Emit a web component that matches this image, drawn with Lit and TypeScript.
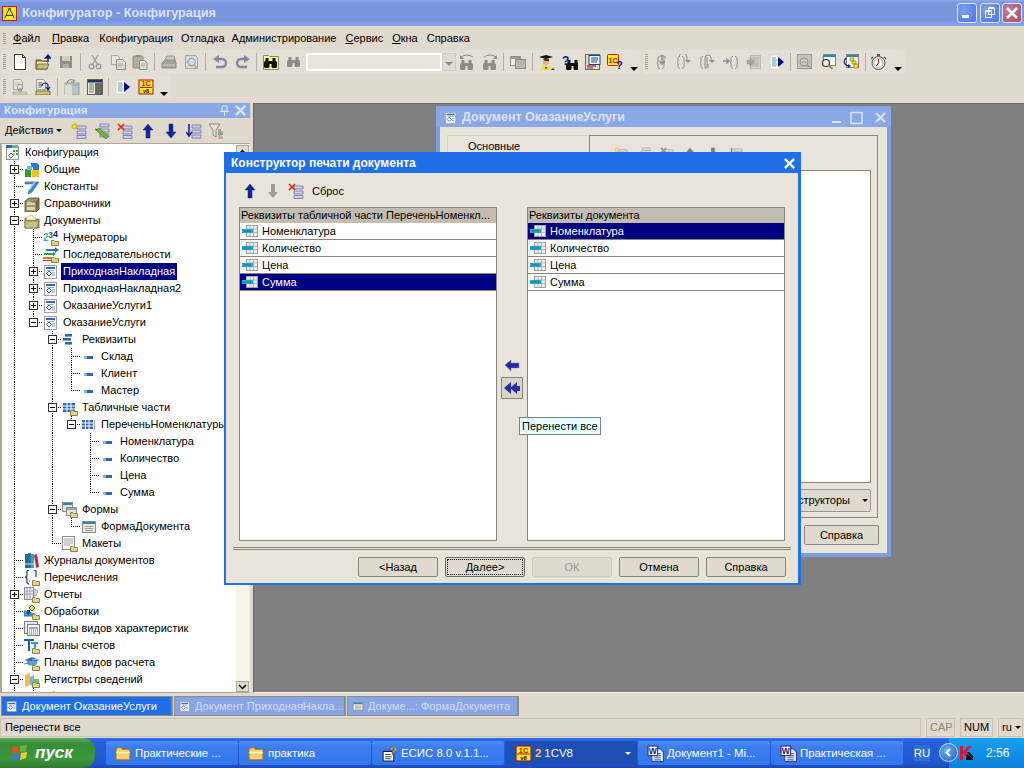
import { LitElement, html, css, svg } from "lit";
import { customElement } from "lit/decorators.js";

const fold = svg`<path d="M8.5 10.5h2.5l1 1h3.5v4h-7z" fill="#dcd488" stroke="#8c8450"/>`;
const bino = (c: string, x = 0, y = 0) => svg`<g transform="translate(${x} ${y})" fill="${c}"><rect x="1" y="6" width="5.5" height="7" rx="1.5"/><rect x="8.5" y="6" width="5.5" height="7" rx="1.5"/><rect x="2.5" y="3" width="3" height="4"/><rect x="9.5" y="3" width="3" height="4"/><rect x="6" y="6" width="3" height="3"/></g>`;
const brace = (c: string, x: number) => svg`<path d="M${x + 3} 2.500c-2 0-2 1-2 3.500s0 2.500-1 2.500c1 0 1 .5 1 2.500s0 3.500 2 3.500M${x + 5} 2.500c2 0 2 1 2 3.500s0 2.500 1 2.500c-1 0-1 .5-1 2.500s0 3.500-2 3.500" fill="none" stroke="${c}"/>`;
const c1 = svg`<rect x="1" y="1" width="14" height="14" fill="#f8ec20" stroke="#b01020"/><text x="8" y="7.2" text-anchor="middle" font-family="Liberation Sans" font-weight="700" font-size="7" fill="#c01010">1С</text><rect x="2" y="8" width="12" height="1" fill="#c01010"/><text x="8" y="14" text-anchor="middle" font-family="Liberation Sans" font-weight="700" font-size="5.5" fill="#101010">v8</text>`;
const pageRun = svg`<rect x="1" y="1" width="10" height="14" fill="#fff" stroke="#d8d4c8"/><path d="M3 4h4M3 6h5M3 8h4M3 10h5M3 12h4" stroke="#58a0a8"/><path d="M9 3l6 5-6 5z" fill="#000090"/>`;
const tdoc = svg`<rect x="1.500" y="1.500" width="12" height="13" fill="#fff" stroke="#a0a0a0"/><rect x="3" y="3" width="9" height="2" fill="#3068c8"/><path d="M4 6.500h7" stroke="#b0b0b0"/><path d="M6 7l2.500 2.500L6 12 3.500 9.500z" fill="#fff" stroke="#3068c8"/><path d="M9 9h3M9 11h3" stroke="#7098d8"/>`;
const tform = svg`<rect x="1.500" y="2.500" width="13" height="11" fill="#ece9d8" stroke="#8c8c8c"/><rect x="2" y="3" width="12" height="2" fill="#2090a8"/><path d="M4 7.500h8M4 9.500h8M4 11.500h8" stroke="#9c9c9c"/>`;
const barsBlue = svg`<path d="M3 2h7v2H3zM1 6h8v2H1zM3 10h7v2H3z" fill="#2c68b8"/><path d="M3 4.500h7M1 8.500h8M3 12.500h7" stroke="#80a8d8"/>`;
const attr = svg`<path d="M3 7h9v3H3z" fill="#2c68b8"/><path d="M3 7h3v3H3z" fill="#88b0e0"/>`;
const tableBlue = svg`<rect x="1" y="3" width="12" height="9" fill="#2c68c0"/><path d="M1 6h12M1 9h12M5 3v9M9 3v9" stroke="#fff"/>`;
const attrIcon = svg`<rect x="4.500" y="2.500" width="11" height="11" fill="#ececec" stroke="#a0a0a0"/><path d="M8 2v11M11.500 2v11M4 6h11M4 9.500h11" stroke="#b8b8b8"/><rect x="0" y="6" width="11" height="4" fill="#20a8c8"/><rect x="2" y="7.500" width="7" height="1" fill="#2c6c98"/>`;
const listX = svg`<path d="M6 3h9v3H6zM6 8h9v3H6zM6 12.500h9v3H6z" fill="#cfd0ee" stroke="#7070a8" stroke-width=".8"/><path d="M1 1l6 6M7 1L1 7" stroke="#e03000" stroke-width="1.700"/>`;

const ICONS: Record<string, unknown> = {
  app: svg`<rect x=".5" y=".5" width="15" height="15" fill="#f4e820" stroke="#c01020"/><path d="M8 2L3 13M8 2l5 11M4 10h8" fill="none" stroke="#303010"/><circle cx="8" cy="3" r="1" fill="#303010"/>`,
  new: svg`<path d="M2.500.5h8l3 3v12h-11z" fill="#fff" stroke="#404040"/><path d="M10.500.5v3h3" fill="none" stroke="#404040"/>`,
  open: svg`<path d="M1 6h5l1 1h5v8H1z" fill="#b0a860" stroke="#585830"/><path d="M2 8h10v2H2z" fill="#f0ec98"/><path d="M1 15l2-5h11l-2 5z" fill="#c8c070" stroke="#585830" stroke-width=".7"/><path d="M13 8V3M10.500 4L13 1l2.500 3z" stroke="#102080" fill="#102080" stroke-width="1.400"/>`,
  save: svg`<path d="M2 2h12v12H2z" fill="#8f8f82"/><path d="M4 2h8v5H4z" fill="#cfcdc2"/><path d="M5 10h6v4H5z" fill="#b4b2a6"/>`,
  cut: svg`<circle cx="4.500" cy="12.500" r="2.300" fill="none" stroke="#9292a2" stroke-width="1.300"/><circle cx="11.500" cy="12.500" r="2.300" fill="none" stroke="#9292a2" stroke-width="1.300"/><path d="M5.500 10.500L11 1M10.500 10.500L5 1" stroke="#a0a094" stroke-width="1.400"/>`,
  copy: svg`<path d="M1.500 1.500h6l2 2v7h-8z" fill="#e8e6dc" stroke="#a8a69a"/><path d="M6.500 5.500h6l3 3v7h-9z" fill="#dedcd2" stroke="#8a8a80"/><path d="M8 10h5M8 12h5" stroke="#a8a69a"/>`,
  paste: svg`<rect x="1" y="2" width="10" height="12" rx="1" fill="#b0ae9e" stroke="#8a8a7c"/><rect x="4" y="1" width="4" height="2" fill="#8a8a7c"/><path d="M7.500 6.500h5l2.500 2.500v6.500H7.500z" fill="#e4e2d8" stroke="#8a8a80"/><path d="M9 10h4M9 12h4" stroke="#a8a69a"/>`,
  print: svg`<path d="M1 9l3-3h10l1 3v5H1z" fill="#a8a69c" stroke="#8c8a80"/><path d="M4 6l2-4h7l1 4z" fill="#cccabe" stroke="#989688"/><path d="M2 11h12" stroke="#ccc9be"/>`,
  prev: svg`<path d="M1.500 1.500h10l2 2v11h-12z" fill="#dddbd0" stroke="#a8a69a"/><circle cx="7.500" cy="8" r="3.600" fill="#d4dfe4" stroke="#8fa0a8" stroke-width="1.200"/><path d="M10 11l3.500 3.500" stroke="#a8a69a" stroke-width="1.600"/>`,
  undo: svg`<path d="M5 5h5a3.500 3.500 0 0 1 0 8H4" fill="none" stroke="#8484a8" stroke-width="2.400"/><path d="M7 1v8L1 5z" fill="#8484a8"/>`,
  redo: svg`<path d="M11 5H6a3.500 3.500 0 0 0 0 8h6" fill="none" stroke="#8484a8" stroke-width="2.400"/><path d="M9 1v8l6-4z" fill="#8484a8"/>`,
  find: svg`<path d="M.5 1.500h5l1 1h9v13H.5z" fill="#f8f4a0" stroke="#888858"/>${bino("#101010", 0, 1)}`,
  bin: bino("#8c8c88"),
  findp: svg`<path d="M2 3Q8-1 14 3" fill="none" stroke="#8a8a86"/><path d="M1 1v4h4z" fill="#8a8a86"/>${bino("#8c8c88", 0, 3)}`,
  findn: svg`<path d="M2 3Q8-1 14 3" fill="none" stroke="#8a8a86"/><path d="M15 1v4h-4z" fill="#8a8a86"/>${bino("#8c8c88", 0, 3)}`,
  win: svg`<rect x=".5" y="2.500" width="10" height="9" fill="#eeece4" stroke="#8c8c88"/><rect x="5.500" y="5.500" width="10" height="9" fill="#b8b6ae" stroke="#8c8c88"/><rect x="1" y="3" width="9" height="2" fill="#9a9a96"/>`,
  student: svg`<path d="M0 3l7-2 7 2-7 2z" fill="#101010"/><path d="M4 5h6v5l-3 2-3-2z" fill="#e8b488"/><path d="M4 5l6 0 0 2H6z" fill="#403020"/><path d="M1 16l3-5 3 2 3-2 4 5z" fill="#e8e040"/><path d="M6 13l1 3 1-3z" fill="#403080"/><path d="M12 16l2-2 2 2z" fill="#303030"/>`,
  qbin: svg`<text x="0" y="11" font-family="Liberation Sans" font-weight="700" font-size="12" fill="#0818a0">?</text>${bino("#101010", 3, 3)}`,
  report: svg`<rect x=".5" y=".5" width="14" height="15" fill="#dcdcc4" stroke="#687838"/><rect x="4" y="1.500" width="11" height="9" fill="#fff" stroke="#1040a0"/><path d="M6 4h7M6 6h7M6 8h6" stroke="#1040a0"/><path d="M2 12h9" stroke="#e02020" stroke-width="1.400"/><path d="M2 14h6" stroke="#3050c0"/>`,
  q1c: svg`<rect x=".5" y=".5" width="11" height="11" rx="1" fill="#f8ec20" stroke="#c02020"/><text x="6" y="8.500" text-anchor="middle" font-family="Liberation Sans" font-weight="700" font-size="7" fill="#c01010">1С</text><text x="9" y="15" font-family="Liberation Sans" font-weight="700" font-size="11" fill="#0818a0">?</text>`,
  d1: svg`${brace("#8c8c8c", 3)}<path d="M8 1v9M5.500 7L8 10.500 10.500 7" fill="none" stroke="#8c8c8c" stroke-width="1.300"/><path d="M4 4a4.500 4.500 0 0 1 8 0" fill="none" stroke="#8c8c8c"/>`,
  d2: svg`${brace("#8c8c8c", 0)}<path d="M2 3a4 4 0 0 1 8 0v3" fill="none" stroke="#8c8c8c"/><path d="M8 6h6l-3 3z" fill="#8c8c8c"/>`,
  d3: svg`${brace("#8c8c8c", 0)}<path d="M5 14V4a3 3 0 0 1 6 0v2" fill="none" stroke="#8c8c8c"/><path d="M9 6h6l-3 3z" fill="#8c8c8c"/><path d="M8 10v4" stroke="#8c8c8c"/>`,
  d4: svg`<path d="M0 7h5M3 4.500L6.500 7 3 9.500" fill="none" stroke="#8c8c8c" stroke-width="1.300"/>${brace("#8c8c8c", 7)}`,
  d5: svg`<rect x="4.500" y="1.500" width="10" height="13" fill="#d4d2c8" stroke="#bcbab0"/><path d="M6 4h7M6 6h7M6 8h7M6 10h7M6 12h7" stroke="#b0aea4"/><path d="M1 6h3V3l4.500 5L4 13v-3H1z" fill="#a8a698" stroke="#98968a" stroke-width=".5"/>`,
  run: pageRun,
  z1: svg`<rect x=".5" y=".5" width="14" height="14" fill="#c4c4ba" stroke="#9c9a90"/><circle cx="7" cy="8" r="4" fill="#cfcfc0" stroke="#8c8c7e"/><path d="M10 11l5 4" stroke="#9c9a90" stroke-width="1.500"/><path d="M5 8h4" stroke="#8c8c7e"/>`,
  z2: svg`<rect x="3.500" y=".5" width="12" height="11" fill="#fff" stroke="#808080"/><rect x="4" y="1" width="11" height="2" fill="#2090a8"/><circle cx="6" cy="9" r="3.500" fill="#eee" stroke="#303030" stroke-width="1.200"/><path d="M8.500 11.500l4 3.500" stroke="#c08030" stroke-width="1.800"/>`,
  z3: svg`<rect x="3.500" y=".5" width="12" height="13" fill="#fff" stroke="#808080"/><rect x="4" y="1" width="11" height="2" fill="#2090a8"/><path d="M7 4h4v3H7zM9 7h4v3H9zM11 10h4v4h-4z" fill="#f0e020" stroke="#807010" stroke-width=".6"/><path d="M3 4C0 7 1 11 5 12" fill="none" stroke="#102090" stroke-width="1.300"/><path d="M5 10v4l3-2z" fill="#102090"/>`,
  watch: svg`<circle cx="7.500" cy="9" r="6.500" fill="#e8e8e4" stroke="#555"/><circle cx="7.500" cy="9" r="4.500" fill="#fff" stroke="#aaa"/><rect x="6" y="0" width="3" height="2" fill="#555"/><path d="M13 3l2 2M2 3L0 5" stroke="#555" stroke-width="1.300"/><path d="M7.500 9V5" stroke="#d01010"/><path d="M7.500 9l-2 3" stroke="#101080"/>`,
  r1: svg`<path d="M1.500.5h7l2 2v8h-9z" fill="#e4e2d8" stroke="#aaa89c"/><path d="M3 4h5M3 6h5" stroke="#c4c2b8"/><circle cx="8" cy="8" r="2.800" fill="none" stroke="#9a9a92"/><path d="M6 11l2 2 2-2M8 9v4" stroke="#8888a0" fill="none"/><path d="M1 13h14v3H1z" fill="#ccc8a8" stroke="#aaa68c" stroke-width=".6"/>`,
  r2: svg`<path d="M1.500.5h7l2 2v8h-9z" fill="#f0eee4" stroke="#9c9a8e"/><path d="M3 4h4" stroke="#e03020"/><path d="M3 6h4" stroke="#3050c0"/><path d="M3 8h4" stroke="#30a050"/><path d="M7 7a3 3 0 0 1 6 0v3M11 8l2 3 2-3" fill="none" stroke="#102090" stroke-width="1.200"/><path d="M1 12h14v4H1z" fill="#d0c870" stroke="#585830" stroke-width=".8"/>`,
  r3: svg`<rect x="1" y="4" width="14" height="12" fill="#b8c4cc" stroke="#a0a098"/><rect x="1" y="6" width="7" height="10" fill="#dcdcd0"/><path d="M9 6h5" stroke="#909aa0"/><path d="M3 4a4 4 0 0 1 7-2M10 0v3H7" fill="none" stroke="#808088"/>`,
  r4: svg`<rect x=".5" y=".5" width="15" height="15" fill="#ece9d8" stroke="#606060"/><rect x="1" y="1" width="14" height="2.500" fill="#2c3050"/><rect x="8" y="4" width="7" height="11" fill="#686868"/><path d="M2 5h5M2 7h5" stroke="#30a080"/><path d="M2 9h5" stroke="#d05030"/><path d="M2 11h5M2 13h5" stroke="#808080"/>`,
  c18: c1,
  root: svg`<rect x="1.500" y="1.500" width="12" height="13" fill="#f4f4f4" stroke="#9c9c9c"/><rect x="1" y="0" width="6" height="3" fill="#3068c8"/><path d="M7 0h6v3H7z" fill="#60b0a0"/><path d="M8 5h2v2H8zM11 5h2v2h-2zM11 8h2v2h-2z" fill="#30a050"/><path d="M8 8h2v2H8z" fill="#d0c040"/><path d="M6 8l2.500 2.500L6 13 3.500 10.500z" fill="#fff" stroke="#3068c8"/>`,
  common: svg`<path d="M7 1h6l2 2v6H9V5H7z" fill="#2080d8"/><path d="M1 7h6v8H1z" fill="#30a030"/><path d="M8 8h7v7H8z" fill="#f0c020"/><path d="M3 4h5v4H3z" fill="#70b8f0"/>`,
  const: svg`<path d="M1 3h14L8 13 4 15l1-4 4-6H1z" fill="#3884d8" stroke="#205090" stroke-width=".5"/><path d="M5 11l6-8" stroke="#a8d0f0" stroke-width="1.500"/><path d="M1 3h10" stroke="#a0a0a0"/>`,
  cab: svg`<path d="M1 5l4-3h10v11l-3 3H1z" fill="#989870" stroke="#404030" stroke-width=".8"/><path d="M3 6h8v3H3z" fill="#d8d8b0"/><path d="M3 11h8v3H3z" fill="#d8d8b0"/><path d="M7 6h5" stroke="#d03020"/><path d="M12 5v10l3-3V2z" fill="#686848"/>`,
  docs: svg`<path d="M1 5h5l1 1h8v9H1z" fill="#b0a868" stroke="#606038" stroke-width=".8"/><path d="M2 5l5-3 5 3-1 2H3z" fill="#fff8c0" stroke="#a8a868" stroke-width=".6"/><path d="M1 8h14l-2 7H1z" fill="#c8c080" stroke="#606038" stroke-width=".6"/>`,
  num: svg`<text x="0" y="11" font-family="Liberation Sans" font-weight="700" font-size="10" fill="#40b0c0">2</text><text x="5" y="8" font-family="Liberation Sans" font-weight="700" font-size="9" fill="#208840">3</text><text x="10" y="7" font-family="Liberation Sans" font-weight="700" font-size="9" fill="#101090">4</text>${fold}`,
  seq: svg`<path d="M3 2h9v2H3z" fill="#3070c8"/><path d="M12 0l4 3-4 3z" fill="#3070c8"/><path d="M1 6h9v2H1z" fill="#30a040"/><path d="M10 4.500l3 2.500-3 2.500z" fill="#30a040"/><path d="M0 10h8v2H0z" fill="#e07030"/><path d="M0 13h8v1H0z" fill="#c03020"/>${fold}`,
  doc: tdoc,
  attrs: barsBlue,
  attr,
  tabs: svg`${tableBlue}${fold}`,
  table: svg`<g transform="translate(0 1)"><rect x="1" y="2" width="11" height="9" fill="#2c68c0"/><path d="M1 5h11M1 8h11M4.500 2v9M8 2v9" stroke="#fff"/></g><path d="M13.500 3v10" stroke="#a0a0a0"/>`,
  forms: svg`<rect x=".5" y=".5" width="10" height="9" fill="#e8e4d8" stroke="#8c8c8c"/><rect x="1" y="1" width="9" height="2" fill="#2090a8"/><rect x="4.500" y="5.500" width="10" height="8" fill="#e8e4d8" stroke="#8c8c8c"/><rect x="5" y="6" width="9" height="2" fill="#80b0b8"/>${fold}`,
  form: tform,
  layouts: svg`<rect x=".5" y=".5" width="12" height="13" fill="#fff" stroke="#8c8c8c"/><path d="M2 3h9M2 5h9M2 7h9M2 9h6" stroke="#a0a0a0"/>${fold}`,
  journal: svg`<rect x="1" y="1" width="3" height="14" fill="#287840"/><rect x="4" y="0" width="3" height="15" fill="#2070c0"/><rect x="7" y="1" width="3" height="14" fill="#40a0c0"/><path d="M10 2l3-1 2 13-3 1z" fill="#b03040"/><path d="M1 11h9" stroke="#e0e0e0"/>`,
  enum: svg`<path d="M5 0C2 0 3 3 3 5S2 7 1 7c1 0 2 1 2 2s-1 5 2 5M10 0c3 0 2 3 2 4" fill="none" stroke="#205090" stroke-width="1.300"/><path d="M12 4v3" stroke="#205090" stroke-width="1.300"/><path d="M5 11h1" stroke="#555"/>${fold}`,
  reports: svg`<rect x=".5" y=".5" width="9" height="12" fill="#e8e8f0" stroke="#8c8c8c"/><path d="M0 4h10M0 7h10M3 0v12M6 0v12" stroke="#a8a8b8"/><path d="M10 2l4 2-2 5h-2z" fill="#dcdcdc" stroke="#8c8c8c" stroke-width=".7"/>${fold}`,
  proc: svg`<path d="M8 1l3 3-3 3-3-3z" fill="#f0e040" stroke="#807820"/><path d="M0 6v6h10V9" fill="#40a0c8" stroke="#307090"/><path d="M3 6h3v3H3z" fill="#1040a0"/><path d="M2 8.500h5L4.500 11z" fill="#1040a0"/>${fold}`,
  chart: svg`<rect x=".5" y=".5" width="13" height="12" fill="#e4e4e4" stroke="#808080"/><rect x="3.500" y="3.500" width="12" height="11" fill="#fff" stroke="#808080"/><path d="M5 7h9" stroke="#2050a0"/><path d="M5 9h9M5 11h9M5 13h9" stroke="#3060b0" stroke-dasharray="1 1"/>`,
  acc: svg`<path d="M0 1h10v2H6v10H4V3H0z" fill="#1858c0"/><path d="M7 4h7v2h-2v5h-2V6H7z" fill="#30a0c8"/>${fold}`,
  calc: svg`<path d="M1 5l7-3 7 3-7 3z" fill="#3070b8"/><path d="M3 6v3c2 2 8 2 10 0V6" fill="#58a0d8"/><path d="M0 9l5-1" stroke="#808080"/><path d="M8 5l6-1" stroke="#98c0e8"/>${fold}`,
  reg: svg`<path d="M1 3l5-2v12l-5 2z" fill="#f0c040"/><path d="M6 5l4-2v10H6z" fill="#78b0e0"/><path d="M10 7h5v6h-5z" fill="#70c070"/>${fold}`,
  reg2: svg`<path d="M2 6l4-3 4 3v6H2z" fill="#c0c040"/><path d="M7 4l4-2 3 3v5H7z" fill="#e0a040"/>${fold}`,
  tform,
  tdoc,
  up: svg`<path d="M8 1L3 7h3v8h4V7h3z" fill="#102890" stroke="#102890" stroke-width=".5"/>`,
  down: svg`<path d="M8 15L3 9h3V1h4v8h3z" fill="#102890" stroke="#102890" stroke-width=".5"/>`,
  downg: svg`<path d="M8 15L3 9h3V1h4v8h3z" fill="#9c9c9c"/>`,
  listNew: svg`<path d="M6 3h9v3H6zM6 8h9v3H6zM6 12.500h9v3H6z" fill="#cfd0ee" stroke="#7070a8" stroke-width=".8"/><circle cx="3.500" cy="3.500" r="2.500" fill="#f8e030" stroke="#d0a000"/>`,
  listEdit: svg`<path d="M6 1h9v3H6zM6 6h9v3H6zM6 11h9v3H6z" fill="#cfd0ee" stroke="#7070a8" stroke-width=".8"/><path d="M2 7l3-2 9 8-2 3z" fill="#70c020" stroke="#206010" stroke-width=".6"/><path d="M1 5l2 2-1 1z" fill="#303030"/>`,
  listX,
  listDown: svg`<path d="M6 2h9v3H6zM6 7h9v3H6zM6 12h9v3H6z" fill="#cfd0ee" stroke="#7070a8" stroke-width=".8"/><path d="M3 1v11M0 9l3 4 3-4" fill="none" stroke="#102890" stroke-width="1.600"/>`,
  filter: svg`<path d="M0 1h11L7 7v7L4 12V7z" fill="#e4e2d8" stroke="#888880"/><path d="M9 7h3" stroke="#e03020"/><path d="M9 9h5" stroke="#30a050"/><path d="M9 11h5" stroke="#3050c0"/><path d="M9 13h4" stroke="#e08020"/><path d="M9 15h5" stroke="#888"/>`,
  attrIcon,
  wleft: svg`<path d="M1 8l6-5v3h8v5H7v3z" fill="#2c2ca0" stroke="#8080a8" stroke-width=".5"/>`,
  wleft2: svg`<path d="M0 8l7-6v12z" fill="#2c2ca0"/><path d="M6 8l7-6v12z" fill="#2c2ca0"/><path d="M12 6h4v5h-4z" fill="#2c2ca0"/>`,
  folder: svg`<path d="M1 4l1-1.500h4l1 1.500h7v10H1z" fill="#f4d070" stroke="#a07820"/><path d="M1 7h13" stroke="#fff4b0" stroke-width="1.500"/>`,
  ques: svg`<path d="M2 6h8l2 2v7H2z" fill="#fff" stroke="#202020"/><path d="M4 9h5M4 11h6M4 13h5" stroke="#404040"/><text x="8" y="9.500" font-family="Liberation Sans" font-weight="700" font-size="11" fill="#f8e030" stroke="#403000" stroke-width=".4">?</text>`,
  word: svg`<path d="M4.500 3.500h8l3 3v9h-11z" fill="#e0e8f8" stroke="#404080"/><path d="M7 8h6M7 10h6M7 12h6M7 14h6" stroke="#5070b0"/><rect x="1" y="1" width="9" height="9" fill="#fff" stroke="#303070"/><text x="5.500" y="8.500" text-anchor="middle" font-family="Liberation Sans" font-weight="700" font-size="8" fill="#102080">W</text>`,
  kasp: svg`<path d="M1 1h3v6l5-6h4L7 7l6 7H9L4 8v7H1z" fill="#e01030"/><path d="M8 9l6 5v1H7z" fill="#000"/><path d="M8 7h2l4 4v3z" fill="#000"/>`,
};

const icon = (n: string, cls = "") => html`<svg class="ic ${cls}" viewBox="0 0 16 16">${ICONS[n]}</svg>`;

const A1 = ["new", "open", "save", "|", "cut", "copy", "paste", "|", "print", "prev", "|", "undo", "redo", "|", "find", "bin", "@", "findp", "findn", "|", "win", "|", "student", "qbin", "report", "q1c", "v"];
const A2 = ["d1", "d2", "d3", "d4", "d5", "run", "|", "z1", "z2", "z3", "|", "watch", "v"];
const A3 = ["r1", "r2", "|", "r3", "r4", "|", "run", "c18", "v"];
const P = ["listNew", "listEdit", "listX", "up", "down", "listDown", "filter"];

type Row = [string, string, string, string?];
const ROWS: Row[] = [
  ["", "root", "Конфигурация"],
  ["t+", "common", "Общие"],
  ["t", "const", "Константы"],
  ["t+", "cab", "Справочники"],
  ["t-", "docs", "Документы"],
  ["vt", "num", "Нумераторы"],
  ["vt", "seq", "Последовательности"],
  ["vt+", "doc", "ПриходнаяНакладная", "sel"],
  ["vt+", "doc", "ПриходнаяНакладная2"],
  ["vt+", "doc", "ОказаниеУслуги1"],
  ["vl-", "doc", "ОказаниеУслуги"],
  ["v.t-", "attrs", "Реквизиты"],
  ["v.vt", "attr", "Склад"],
  ["v.vt", "attr", "Клиент"],
  ["v.vl", "attr", "Мастер"],
  ["v.t-", "tabs", "Табличные части"],
  ["v.vl-", "table", "ПереченьНоменклатуры"],
  ["v.v.t", "attr", "Номенклатура"],
  ["v.v.t", "attr", "Количество"],
  ["v.v.t", "attr", "Цена"],
  ["v.v.l", "attr", "Сумма"],
  ["v.t-", "forms", "Формы"],
  ["v.vl", "form", "ФормаДокумента"],
  ["v.l", "layouts", "Макеты"],
  ["t", "journal", "Журналы документов"],
  ["t", "enum", "Перечисления"],
  ["t+", "reports", "Отчеты"],
  ["t", "proc", "Обработки"],
  ["t", "chart", "Планы видов характеристик"],
  ["t", "acc", "Планы счетов"],
  ["t", "calc", "Планы видов расчета"],
  ["t-", "reg", "Регистры сведений"],
  ["vt+", "reg2", "Н"],
];
const LIST = ["Номенклатура", "Количество", "Цена", "Сумма"];

@customElement("app-root")
export class AppRoot extends LitElement {
  static styles = css`
    :host { display: block; width: 1024px; height: 768px; position: relative; overflow: hidden; background: #dfd9ce; font: 11px/15px "Liberation Sans", Arial, sans-serif; color: #000; }
    * { box-sizing: border-box; }
    .ic { width: 16px; height: 16px; display: block; flex: none; }
    .frame { display: flex; flex-direction: column; height: 768px; }

    .title { height: 26px; flex: none; display: flex; align-items: center; padding: 0 2px; background: linear-gradient(#90abe8 0, #7a97e0 3px, #7795de 20px, #8aa8ea 26px); color: #dbe5f6; font-weight: 700; font-size: 12.700px; }
    .title .ic { margin-right: 5px; width: 15px; height: 15px; }
    .title b { flex: 1; }
    .wb { width: 20px; height: 20px; margin-left: 3px; border: 1px solid #dfe7fa; border-radius: 3px; background: radial-gradient(circle at 30% 30%, #7f9ff0, #4a74e0); display: flex; align-items: center; justify-content: center; }
    .wb.close { background: radial-gradient(circle at 30% 30%, #c07c94, #a05070); margin-left: 2px; }
    .wb svg { width: 14px; height: 14px; display: block; }

    .menu { height: 24px; flex: none; display: flex; align-items: center; padding: 1px 0 0 3px; }
    .grip { width: 3px; flex: none; height: 12px; background: repeating-linear-gradient(#a09c90 0 1px, transparent 1px 2px); }
    .menu .grip { margin-right: 2px; }
    .menu span { padding: 0 5px; }
    .menu .wide { margin-right: 2px; }
    .menu .tight1 { margin-right: -1px; }
    .menu .tight2 { margin-right: -2px; }
    .menu .tight3 { margin-right: -3px; }
    .menu u { text-decoration: underline; }

    .bars { display: flex; flex: none; height: 25px; }
    .tb { display: flex; align-items: center; background: #e4dfd5; border-radius: 3px; height: 24px; padding-left: 2px; }
    .tb .grip { height: 16px; margin-right: 3px; width: 3px; }
    .tb1 { margin-left: 1px; width: 639px; }
    .tb2 { margin-left: 3px; width: 262px; }
    .tb3 { margin-left: 1px; width: 170px; }
    .tbtn { width: 22.900px; height: 22px; flex: none; display: flex; align-items: center; justify-content: center; }
    .sep { width: 5.500px; flex: none; height: 18px; display: block; background: linear-gradient(#b4afa3, #b4afa3) 2px 0 / 1px 100% no-repeat; }
    .drop { width: 14px; flex: none; height: 22px; display: flex; align-items: flex-end; justify-content: center; padding-bottom: 2px; }
    .drop::after { content: ""; border: 4px solid transparent; border-top: 4px solid #000; border-bottom: 0; }
    .combo { flex: none; width: 136px; height: 18px; border: 2px solid #fff; background: #e9e4da; }
    .cdrop { flex: none; width: 14px; height: 18px; display: flex; align-items: center; justify-content: center; background: #e0dbd0; border: 1px solid #d0cbbe; }
    .cdrop::after { content: ""; border: 4px solid transparent; border-top: 4px solid #888; border-bottom: 0; margin-top: 3px; }
    .gap1 { height: 2px; flex: none; }

    .main { flex: 1; min-height: 0; display: flex; }
    .side { width: 250px; flex: none; display: flex; flex-direction: column; padding-top: 1px; }
    .ptitle { height: 15px; flex: none; display: flex; align-items: center; background: #8aa8e6; color: #dbe5f6; font-weight: 700; font-size: 11.500px; padding-left: 4px; }
    .ptitle b { flex: 1; }
    .ptitle svg { width: 13px; height: 13px; margin-right: 3px; display: block; }
    .ptool { height: 25px; flex: none; display: flex; align-items: center; padding-left: 5px; }
    .ptool .act { width: 62px; display: flex; align-items: center; gap: 3px; }
    .ptool .act::after { content: ""; border: 3px solid transparent; border-top: 3px solid #000; border-bottom: 0; }
    .ptool .tbtn { width: 23px; }
    .tree { flex: 1; min-height: 0; display: flex; border-top: 1px solid #aca899; border-left: 2px solid #aca899; border-bottom: 1px solid #aca899; background: #fff; overflow: hidden; }
    .rows { flex: 1; min-width: 0; padding-left: 3px; overflow: hidden; }
    .row { display: flex; height: 17px; align-items: center; white-space: nowrap; }
    .c { width: 19px; height: 17px; flex: none; display: flex; align-items: center; padding-left: 5px; background-repeat: no-repeat; }
    .row .ic { margin-right: 2px; }
    .row .lab { padding: 1px 2px; height: 17px; }
    .row.sel .lab { background: #000080; color: #fff; }
    .c.v { background-image: repeating-linear-gradient(#000 0 1px, transparent 1px 2px); background-size: 1px 100%; background-position: 9px 0; }
    .c.t { background-image: repeating-linear-gradient(#000 0 1px, transparent 1px 2px), repeating-linear-gradient(90deg, #000 0 1px, transparent 1px 2px); background-size: 1px 100%, 10px 1px; background-position: 9px 0, 9px 8px; }
    .c.l { background-image: repeating-linear-gradient(#000 0 1px, transparent 1px 2px), repeating-linear-gradient(90deg, #000 0 1px, transparent 1px 2px); background-size: 1px 9px, 10px 1px; background-position: 9px 0, 9px 8px; }
    .xb { width: 9px; height: 9px; display: block; flex: none; }
    .sb { width: 14px; flex: none; background: #f6f3e8; display: flex; flex-direction: column; justify-content: space-between; padding-top: 1px; }
    .sbb { height: 14px; width: 13px; flex: none; background: #e0dbd0; border: 1px solid #a8a498; display: flex; align-items: center; justify-content: center; }
    .sbb.low { height: 11px; }
    .sbb svg { width: 9px; height: 6px; display: block; }

    .split { width: 3px; flex: none; }
    .desk { flex: 1; min-width: 0; background: #808080; margin-top: 1px; border-top: 1px solid #6c6a5c; border-left: 1px solid #6c6a5c; border-bottom: 1px solid #f4f2ea; }

    .tabs { height: 24px; flex: none; display: flex; align-items: flex-start; padding: 3px 0 0 1px; gap: 1px; }
    .tab { width: 172px; height: 20px; border: 1px solid #8c8c84; border-width: 1px 2px 1px 1px; display: flex; align-items: center; gap: 4px; padding-left: 4px; color: #d4ddf4; background: #8aa5e6; white-space: nowrap; overflow: hidden; }
    .tab.on { background: #1f70e8; color: #fff; }
    .tab .ic { width: 12px; height: 13px; }

    .status { height: 19px; flex: none; display: flex; gap: 5px; margin-top: 1px; }
    .st { border: 1px solid #c8c2b4; display: flex; align-items: center; padding-left: 4px; height: 19px; }
    .st.m { width: 921px; }
    .st.cap { width: 29px; padding-left: 3px; color: #8a867a; }
    .st.num { width: 33px; padding-left: 3px; }
    .st.ru { width: 25px; padding-left: 3px; gap: 3px; }
    .st.ru::after { content: ""; border: 3px solid transparent; border-top: 3px solid #000; border-bottom: 0; }

    .task { height: 30px; flex: none; margin-top: 1px; display: flex; align-items: center; color: #fff; background: linear-gradient(#2a6cf0 0, #2c66e4 2px, #245edb 6px, #2358d4 24px, #1c48b8 30px); }
    .start { width: 95px; height: 30px; flex: none; display: flex; align-items: center; gap: 5px; padding-left: 10px; margin-right: 11px; border-radius: 0 12px 12px 0; background: linear-gradient(#5cae5c, #388c38 20%, #3c983c 70%, #2e7a2e); font: italic 700 17px/20px "Liberation Sans", sans-serif; color: #fff; }
    .start svg { width: 20px; height: 20px; display: block; }
    .tk { width: 132px; height: 24px; flex: none; margin-right: 1px; border-radius: 2px; display: flex; align-items: center; gap: 3px; padding-left: 9px; background: linear-gradient(#4a8cf8, #3a7cf0 30%, #3478ee); white-space: nowrap; overflow: hidden; font-size: 11.400px; }
    .tk.act { background: #1d4fb4; padding-left: 10px; gap: 3px; }
    .tk.act::after { content: ""; margin-left: auto; margin-right: 6px; border: 3px solid transparent; border-top: 3px solid #fff; border-bottom: 0; }
    .tk .n { color: #f4c060; font-weight: 700; }
    .tk .ic { width: 17px; height: 17px; }
    .lang { margin-left: 10px; width: 16px; height: 16px; background: #2f6fd8; font-size: 11.400px; display: flex; align-items: center; justify-content: center; }
    .tray { margin-left: auto; width: 75px; height: 30px; background: linear-gradient(#18a0f0, #1090e8 50%, #0f80d8); display: flex; align-items: center; position: relative; padding-left: 10px; }
    .chev { position: absolute; left: -10px; top: 5px; width: 19px; height: 19px; border-radius: 50%; background: radial-gradient(circle at 40% 40%, #70b0f8, #1858c8); border: 1px solid #c8dcf8; display: flex; align-items: center; justify-content: center; }
    .chev svg { width: 9px; height: 9px; display: block; }
    .tray .clock { margin-left: 11px; font-size: 12px; }

    .win { position: absolute; left: 436px; top: 106px; width: 455px; height: 451px; border: 4px solid #7f9de2; border-top-width: 1px; display: flex; flex-direction: column; background: #e9e4da; }
    .wt { height: 20px; flex: none; margin: 0 -4px; padding: 1px 0 0 8px; background: #8aa8e6; display: flex; align-items: center; gap: 4px; color: #dbe5f6; font-weight: 700; font-size: 12.500px; }
    .wt b { flex: 1; }
    .wt svg.g { width: 14px; height: 14px; display: block; }
    .wbody { flex: 1; min-height: 0; padding: 8px 9px 7px 7px; display: flex; flex-direction: column; }
    .wtop { display: flex; height: 383px; flex: none; }
    .wtab { width: 142px; flex: none; height: 21px; border-top: 1px solid #d8d2c4; border-left: 1px solid #d8d2c4; padding: 3px 0 0 20px; }
    .wframe { flex: 1; border: 1px solid #8a8578; display: flex; flex-direction: column; padding: 11px 6px 5px 6px; }
    .wtool { height: 16px; display: flex; flex: none; padding-left: 18px; gap: 9px; align-items: flex-start; opacity: .55; }
    .wtool .ic { width: 14px; height: 14px; }
    .wtool .ic:not(:first-child) { filter: grayscale(1); }
    .wwhite { flex: 1; min-height: 0; background: #fff; border: 1px solid #8a8578; margin-top: 7px; }
    .wctl { align-self: flex-end; margin-top: 6px; width: 140px; height: 23px; background: #dfd9ce; border: 1px solid #9c9788; border-radius: 2px; display: flex; align-items: center; justify-content: flex-end; gap: 12px; padding: 0 2px 0 0; }
    .wctl::after { content: ""; border: 3px solid transparent; border-top: 3px solid #000; border-bottom: 0; }
    .wfoot { flex: 1; display: flex; justify-content: flex-end; align-items: center; padding-top: 6px; }
    .btn { width: 80px; height: 20px; flex: none; background: #dfd9ce; border: 1px solid #8a8578; border-radius: 2px; display: flex; align-items: center; justify-content: center; }
    .wfoot .btn { width: 75px; margin-right: -1px; }
    .btn.off { color: #9c9a8e; border-color: #cbc6ba; }
    .btn.foc { outline: 1px dotted #000; outline-offset: -3px; border-color: #6c685c; }

    .dlg { position: absolute; left: 224px; top: 152px; width: 577px; height: 433px; border: 2px solid #1f70e8; border-width: 1px 3px 2px 2px; background: #e9e4da; display: flex; flex-direction: column; }
    .dt { height: 20px; flex: none; margin: 0 -3px 0 -2px; padding: 1px 5px 0 7px; background: #1f70e8; color: #fff; font-weight: 700; font-size: 12px; display: flex; align-items: center; }
    .dt b { flex: 1; }
    .dt svg { width: 13px; height: 13px; display: block; }
    .dtool { height: 34px; flex: none; display: flex; align-items: center; padding: 2px 0 0 16px; }
    .dtool .ic { margin-right: 7px; }
    .dtool span { margin-left: 1px; }
    .lists { display: flex; flex: none; height: 334px; padding-left: 13px; }
    .ls { width: 258px; flex: none; border: 1px solid #8a8578; background: #fff; display: flex; flex-direction: column; overflow: hidden; }
    .lh { height: 15px; flex: none; background: #c3bcb0; padding-left: 1px; white-space: nowrap; overflow: hidden; line-height: 15px; }
    .li { height: 17px; flex: none; border-bottom: 1px solid #8a8578; display: flex; align-items: center; gap: 4px; padding-left: 2px; }
    .li.sel { background: #000080; color: #fff; }
    .mid { width: 30px; flex: none; display: flex; flex-direction: column; align-items: center; padding-top: 147px; position: relative; }
    .mb { width: 22px; height: 22px; flex: none; display: flex; align-items: center; justify-content: center; border: 1px solid transparent; }
    .mb.on { background: #d9d4c8; border-color: #8a8578; margin-top: 1px; }
    .tip { position: absolute; left: 22px; top: 210px; width: 82px; height: 18px; background: #e6ffff; border: 1px solid #808080; padding-left: 2px; white-space: nowrap; display: flex; align-items: center; z-index: 2; }
    .hr { height: 3px; flex: none; border-top: 1px solid #8a8578; border-bottom: 1px solid #8a8578; margin: 6px 7px 0 7px; }
    .dbtn { flex: 1; display: flex; justify-content: flex-end; gap: 7px; align-items: flex-start; padding: 7px 12px 0 0; }
  `;

  tbItems(a: string[]) {
    return a.map((i) =>
      i === "|" ? html`<i class="sep"></i>`
      : i === "v" ? html`<span class="drop"></span>`
      : i === "@" ? html`<span class="combo"></span><span class="cdrop"></span>`
      : html`<span class="tbtn">${icon(i)}</span>`
    );
  }

  treeRow(r: Row) {
    const p = r[0];
    const exp = /[+-]$/.test(p) ? p[p.length - 1] : "";
    const st = exp ? p.slice(0, -1) : p;
    const cells = [...st].map((ch, i) => html`<span class="c ${ch === "." ? "" : ch}">${i === st.length - 1 && exp ? this.box(exp) : ""}</span>`);
    return html`<div class="row ${r[3] ?? ""}">${cells}${icon(r[1])}<span class="lab">${r[2]}</span></div>`;
  }

  box(e: string) {
    return html`<svg class="xb" viewBox="0 0 9 9"><rect x=".5" y=".5" width="8" height="8" fill="#fff" stroke="#303030"/><path d="M2 4.500h5" stroke="#000"/>${e === "+" ? svg`<path d="M4.500 2v5" stroke="#000"/>` : ""}</svg>`;
  }

  listRows(sel: number) {
    return LIST.map((t, i) => html`<div class="li ${i === sel ? "sel" : ""}">${icon("attrIcon")}<span>${t}</span></div>`);
  }

  render() {
    const cross = (c: string) => html`<svg viewBox="0 0 14 14"><path d="M2 2l10 10M12 2L2 12" stroke="${c}" stroke-width="2.500"/></svg>`;
    return html`
      <div class="frame">
        <div class="title">
          ${icon("app")}<b>Конфигуратор - Конфигурация</b>
          <span class="wb"><svg viewBox="0 0 14 14"><rect x="2" y="9" width="7" height="3" fill="#fff"/></svg></span>
          <span class="wb"><svg viewBox="0 0 14 14"><path d="M5.500 2.500h6v6h-6zM5.500 1.500h6M2.500 5.500h6v6h-6zM2.500 4.500h6" fill="none" stroke="#fff"/></svg></span>
          <span class="wb close">${cross("#fff")}</span>
        </div>
        <div class="menu">
          <i class="grip"></i>
          <span class="wide"><u>Ф</u>айл</span><span><u>П</u>равка</span><span class="tight2">Конфигурация</span><span class="tight3">Отладка</span><span class="tight1">Администрирование</span><span class="tight1"><u>С</u>ервис</span><span class="tight1"><u>О</u>кна</span><span>Справка</span>
        </div>
        <div class="bars">
          <div class="tb tb1"><i class="grip"></i>${this.tbItems(A1)}</div>
          <div class="tb tb2"><i class="grip"></i>${this.tbItems(A2)}</div>
        </div>
        <div class="bars">
          <div class="tb tb3"><i class="grip"></i>${this.tbItems(A3)}</div>
        </div>
        <div class="gap1"></div>
        <div class="main">
          <div class="side">
            <div class="ptitle"><b>Конфигурация</b>
              <svg viewBox="0 0 13 13"><path d="M4 2h5v5H4zM2 7.500h9M6.500 8v4" fill="none" stroke="#dbe5f6"/></svg>
              ${cross("#dbe5f6")}
            </div>
            <div class="ptool"><span class="act">Действия</span>${P.map((i) => html`<span class="tbtn">${icon(i)}</span>`)}</div>
            <div class="tree">
              <div class="rows">${ROWS.map((r) => this.treeRow(r))}</div>
              <div class="sb">
                <span class="sbb"><svg viewBox="0 0 9 6"><path d="M1 5l3.500-3.500L8 5" fill="none" stroke="#000" stroke-width="1.500"/></svg></span>
                <span class="sbb low"><svg viewBox="0 0 9 6"><path d="M1 1l3.500 3.500L8 1" fill="none" stroke="#000" stroke-width="1.500"/></svg></span>
              </div>
            </div>
          </div>
          <div class="split"></div>
          <div class="desk"></div>
        </div>
        <div class="tabs">
          <div class="tab on">${icon("tdoc")}<span>Документ ОказаниеУслуги</span></div>
          <div class="tab">${icon("tdoc")}<span>Документ ПриходнаяНакла...</span></div>
          <div class="tab">${icon("tform")}<span>Докуме...: ФормаДокумента</span></div>
        </div>
        <div class="status">
          <div class="st m">Перенести все</div>
          <div class="st cap">CAP</div><div class="st num">NUM</div><div class="st ru">ru</div>
        </div>
        <div class="task">
          <div class="start"><svg viewBox="0 0 20 20"><path d="M2 5l6-2 1 6-6 2z" fill="#e85028"/><path d="M10 3l7-1-1 6-6 1z" fill="#60b838"/><path d="M3 12l6-2 1 6-6 2z" fill="#3878e0"/><path d="M11 10l6-1-1 6-6 2z" fill="#f8c828"/></svg>пуск</div>
          <div class="tk">${icon("folder")}<span>Практические ...</span></div>
          <div class="tk">${icon("folder")}<span>практика</span></div>
          <div class="tk">${icon("ques")}<span>ЕСИС 8.0 v.1.1...</span></div>
          <div class="tk act">${icon("c18")}<span class="n">2</span><span>1CV8</span></div>
          <div class="tk">${icon("word")}<span>Документ1 - Mi...</span></div>
          <div class="tk">${icon("word")}<span>Практическая ...</span></div>
          <div class="lang">RU</div>
          <div class="tray">
            <span class="chev"><svg viewBox="0 0 9 9"><path d="M6 1L2.500 4.500 6 8" fill="none" stroke="#fff" stroke-width="2"/></svg></span>
            ${icon("kasp")}<span class="clock">2:56</span>
          </div>
        </div>
      </div>

      <div class="win">
        <div class="wt"><svg class="g" viewBox="0 0 16 16">${ICONS.tdoc}</svg><b>Документ ОказаниеУслуги</b>
          <svg width="60" height="14" viewBox="0 0 60 14"><rect x="1" y="10" width="9" height="2" fill="#dbe5f6"/><rect x="20" y="1.500" width="11" height="11" fill="none" stroke="#dbe5f6" stroke-width="1.500"/><path d="M45 2l9 9M54 2l-9 9" stroke="#dbe5f6" stroke-width="2"/></svg>
        </div>
        <div class="wbody">
          <div class="wtop">
            <div class="wtab">Основные</div>
            <div class="wframe">
              <div class="wtool">${icon("listNew")}${icon("listEdit")}${icon("listX")}${icon("up")}${icon("down")}${icon("listDown")}</div>
              <div class="wwhite"></div>
              <div class="wctl"><span>Конструкторы</span></div>
            </div>
          </div>
          <div class="wfoot"><span class="btn">Справка</span></div>
        </div>
      </div>

      <div class="dlg">
        <div class="dt"><b>Конструктор печати документа</b>${cross("#fff")}</div>
        <div class="dtool">${icon("up")}${icon("downg")}${icon("listX")}<span>Сброс</span></div>
        <div class="lists">
          <div class="ls"><div class="lh">Реквизиты табличной части ПереченьНоменкл...</div>${this.listRows(3)}</div>
          <div class="mid">
            <span class="mb">${icon("wleft")}</span>
            <span class="mb on">${icon("wleft2")}</span>
            <div class="tip">Перенести все</div>
          </div>
          <div class="ls"><div class="lh">Реквизиты документа</div>${this.listRows(0)}</div>
        </div>
        <div class="hr"></div>
        <div class="dbtn">
          <span class="btn">&lt;Назад</span><span class="btn foc">Далее&gt;</span><span class="btn off">ОК</span><span class="btn">Отмена</span><span class="btn">Справка</span>
        </div>
      </div>
    `;
  }
}
